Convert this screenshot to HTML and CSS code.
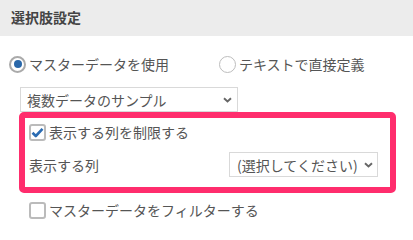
FILE: index.html
```html
<!DOCTYPE html>
<html lang="ja">
<head>
<meta charset="utf-8">
<link rel="stylesheet" href="styles.css">
</head>
<body>
<div class="header">選択肢設定</div>
<div class="content">
  <div class="radios">
    <div class="radio"><span class="radio-circle checked"><span class="dot"></span></span><span>マスターデータを使用</span></div>
    <div class="radio second"><span class="radio-circle"></span><span>テキストで直接定義</span></div>
  </div>
  <div class="select select-master">
    <span>複数データのサンプル</span>
    <svg class="chev" width="9" height="6" viewBox="0 0 9 6"><path d="M1 1.2 L4.5 4.5 L8 1.2" fill="none" stroke="#666" stroke-width="1.9"/></svg>
  </div>
  <div class="highlight">
    <div class="check-row">
      <span class="checkbox checked"><svg width="13" height="11" viewBox="0 0 13 11"><path d="M1.5 5.8 L4.8 9 L11.5 1.8" fill="none" stroke="#2b6cb3" stroke-width="2.6" stroke-linejoin="round"/></svg></span>
      <span>表示する列を制限する</span>
    </div>
    <div class="field-row">
      <span>表示する列</span>
      <div class="select select-cols">
        <span>(選択してください)</span>
        <svg class="chev" width="9" height="6" viewBox="0 0 9 6"><path d="M1 1.2 L4.5 4.5 L8 1.2" fill="none" stroke="#666" stroke-width="1.9"/></svg>
      </div>
    </div>
  </div>
  <div class="check-row filter">
    <span class="checkbox"></span>
    <span>マスターデータをフィルターする</span>
  </div>
</div>
</body>
</html>
```

FILE: styles.css
```css
* { box-sizing: border-box; }
html, body { margin: 0; padding: 0; background: #fff; }
body {
  font-family: "Noto Sans CJK JP", "Noto Sans", sans-serif;
  font-size: 14px;
  color: #555;
  width: 413px;
  height: 228px;
  overflow: hidden;
}
.header {
  height: 36px;
  line-height: 34px;
  background: #ececec;
  padding-left: 11px;
  font-weight: bold;
  color: #444;
}
.content { display: flex; flex-direction: column; }
.radios {
  display: flex;
  margin-top: 18px;
  padding-left: 9px;
  height: 20px;
  align-items: center;
}
.radio { display: flex; align-items: center; gap: 3px; line-height: 20px; }
.radio.second { margin-left: 50px; }
.radio-circle {
  width: 17px; height: 17px;
  border-radius: 50%;
  border: 1px solid #bdbdbd;
  display: flex; align-items: center; justify-content: center;
  background: #fff;
}
.radio-circle.checked { border: 2px solid #aaa; }
.dot { width: 8px; height: 8px; border-radius: 50%; background: #2a68aa; }
.select {
  display: flex;
  align-items: center;
  justify-content: space-between;
  border: 1px solid #d9d9d9;
  background: #fff;
  color: #555;
}
.select-master {
  margin-top: 13px;
  margin-left: 20px;
  width: 218px;
  height: 25px;
  padding: 0 5px 0 6px;
}
.highlight {
  margin-left: 19px;
  width: 377px;
  height: 81px;
  border: 6px solid #ff2d6d;
  border-radius: 5px;
  padding: 4px 12px 0 4px;
  display: flex;
  flex-direction: column;
}
.check-row { display: flex; align-items: center; gap: 3px; height: 20px; line-height: 20px; }
.checkbox {
  width: 17px; height: 17px;
  border: 2px solid #bbb;
  border-radius: 3px;
  display: flex; align-items: center; justify-content: center;
  background: #fff;
}
.field-row {
  margin-top: 10px;
  display: flex;
  align-items: center;
  justify-content: space-between;
}
.select-cols {
  width: 149px;
  height: 25px;
  padding: 0 4px 0 7px;
}
.filter { margin-top: 7px; margin-left: 29px; }
```
